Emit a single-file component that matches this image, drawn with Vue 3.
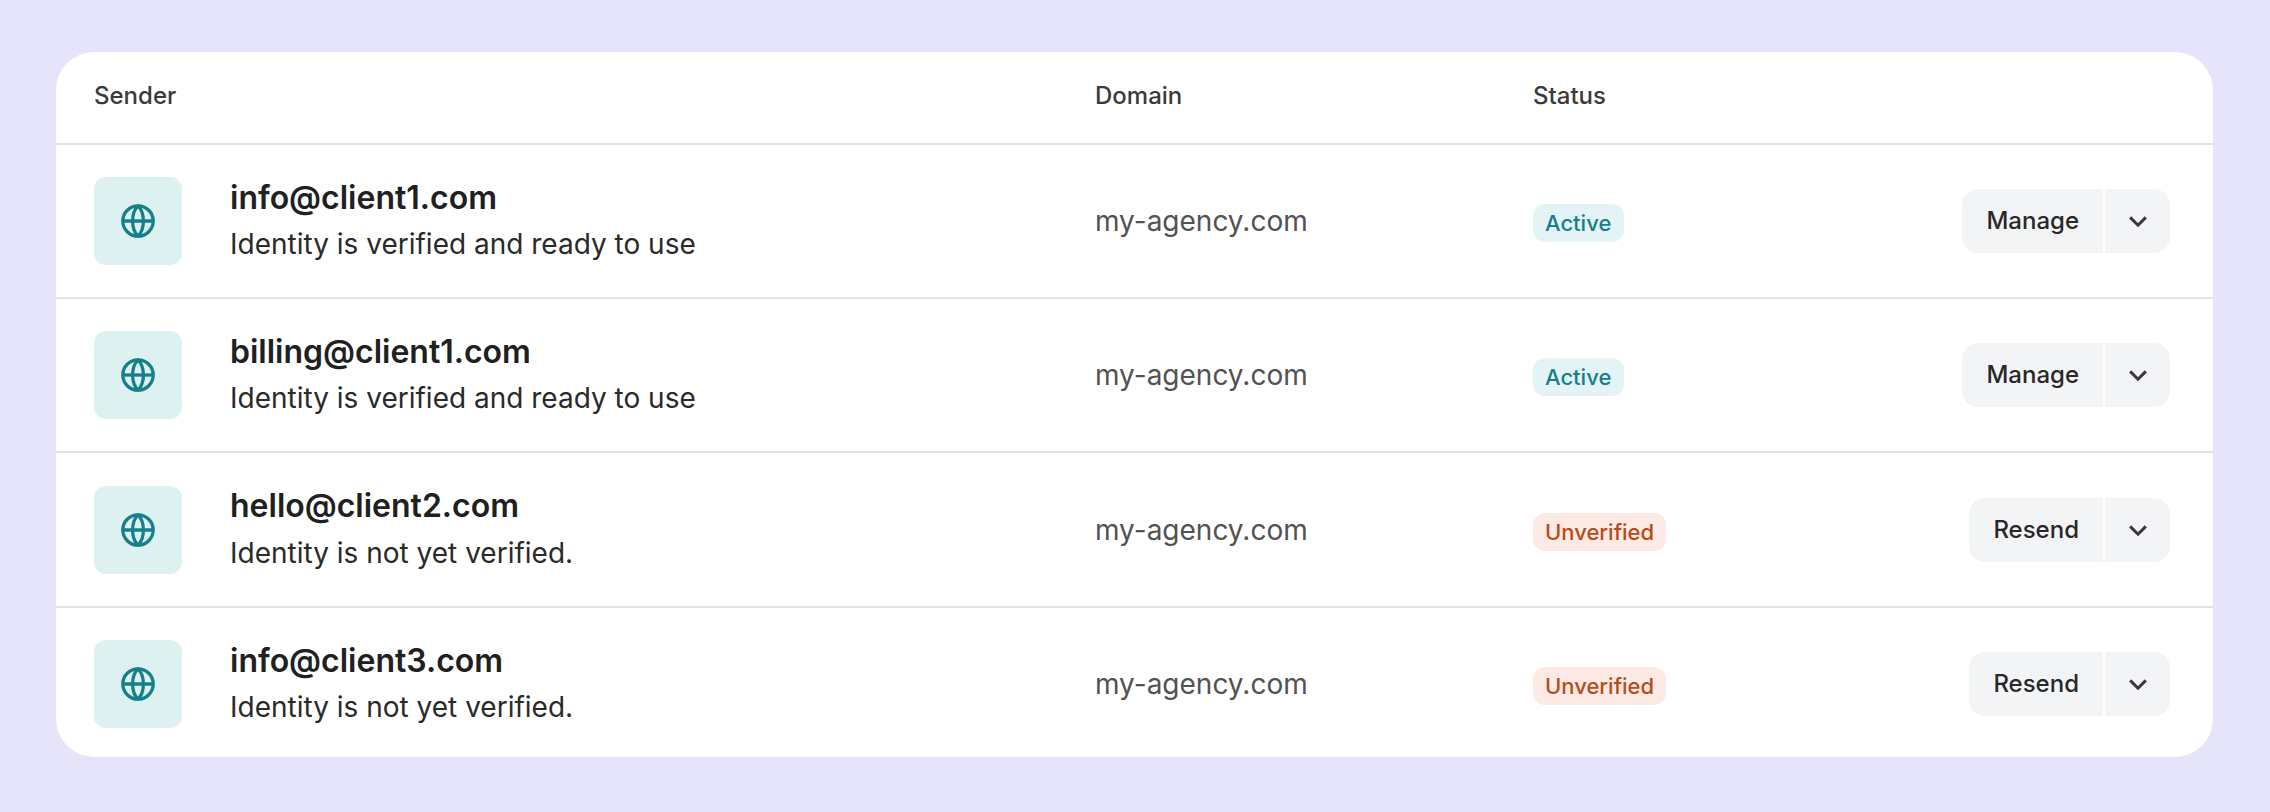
<script setup>
import { ref } from 'vue'

const senders = ref([
  { email: 'info@client1.com', note: 'Identity is verified and ready to use', domain: 'my-agency.com', status: 'Active', action: 'Manage' },
  { email: 'billing@client1.com', note: 'Identity is verified and ready to use', domain: 'my-agency.com', status: 'Active', action: 'Manage' },
  { email: 'hello@client2.com', note: 'Identity is not yet verified.', domain: 'my-agency.com', status: 'Unverified', action: 'Resend' },
  { email: 'info@client3.com', note: 'Identity is not yet verified.', domain: 'my-agency.com', status: 'Unverified', action: 'Resend' },
])
</script>

<template>
  <main class="page">
    <section class="card">
      <header class="head columns">
        <span>Sender</span>
        <span>Domain</span>
        <span>Status</span>
      </header>

      <div v-for="sender in senders" :key="sender.email" class="row columns">
        <div class="sender">
          <div class="tile">
            <svg class="globe" viewBox="0 0 34 34" fill="none" stroke="currentColor" stroke-width="3.3">
              <circle cx="17" cy="17" r="15.2" />
              <path d="M2 17h30" />
              <path d="M17 1.8C9.8 9 9.8 25 17 32.2C24.2 25 24.2 9 17 1.8z" stroke-linejoin="round" />
            </svg>
          </div>
          <div>
            <div class="email">{{ sender.email }}</div>
            <div class="note">{{ sender.note }}</div>
          </div>
        </div>
        <div class="domain">{{ sender.domain }}</div>
        <div class="status">
          <span class="badge" :class="sender.status.toLowerCase()">{{ sender.status }}</span>
        </div>
        <div class="actions">
          <button class="btn main">{{ sender.action }}</button>
          <button class="btn more" aria-label="More actions">
            <svg class="chevron" viewBox="0 0 18 12" fill="none" stroke="currentColor" stroke-width="3">
              <path d="M1.2 1.4L9 9.2l7.8-7.8" />
            </svg>
          </button>
        </div>
      </div>
    </section>
  </main>
</template>

<style>
body {
  background: #e6e4fa;
}
</style>

<style scoped>
.page {
  box-sizing: border-box;
  height: 812px;
  padding: 52px 57px 55px 56px;
  font-family: Inter, "Liberation Sans", sans-serif;
}

.card {
  height: 705px;
  background: #fff;
  border-radius: 38px;
  overflow: hidden;
}

.columns {
  display: grid;
  grid-template-columns: 1001px 438px 1fr auto;
  box-sizing: border-box;
  padding: 0 43px 0 38px;
}

.head {
  height: 91px;
  padding-top: 29px;
  font-size: 24px;
  line-height: 30px;
  font-weight: 500;
  color: #3a3a3a;
}

.row {
  height: 154px;
  padding-top: 34px;
  align-items: start;
  background: linear-gradient(#e2e2e2, #e2e2e2) top / 100% 2px no-repeat;
}

.row:nth-child(4) {
  height: 155px;
  padding-top: 35px;
}

.row:nth-child(4) .email {
  margin-top: -1px;
  padding-bottom: 1px;
}

.sender {
  display: flex;
  gap: 48px;
}

.tile {
  display: flex;
  align-items: center;
  justify-content: center;
  width: 88px;
  height: 88px;
  border-radius: 12px;
  background: #ddf1f0;
  color: #16808a;
}

.globe {
  width: 34px;
  height: 34px;
}

.email {
  font-size: 32px;
  line-height: 42px;
  font-weight: 600;
  color: #202021;
}

.note {
  margin-top: 4px;
  font-size: 28px;
  line-height: 42px;
  color: #2a2a2b;
}

.domain {
  font-size: 28px;
  line-height: 88px;
  color: #525253;
}

.status {
  display: flex;
  padding-top: 27px;
}

.badge {
  box-sizing: border-box;
  min-width: 91px;
  padding: 0 12px;
  border-radius: 12px;
  font-size: 22px;
  line-height: 38px;
  font-weight: 500;
}

.badge.active {
  background: #e4f3f5;
  color: #16808a;
}

.badge.unverified {
  background: #fdeae5;
  color: #b54c1a;
}

.actions {
  display: flex;
  gap: 2px;
  padding-top: 12px;
}

.btn {
  height: 64px;
  padding: 0;
  border: none;
  background: #f3f4f6;
  font-family: inherit;
  font-size: 24px;
  font-weight: 500;
  color: #28282a;
  cursor: pointer;
}

.main {
  padding: 0 24px 1px;
  border-radius: 16px 0 0 16px;
}

.more {
  display: flex;
  align-items: center;
  justify-content: center;
  width: 65px;
  border-radius: 0 16px 16px 0;
  color: #38383c;
}

.chevron {
  width: 18px;
  height: 12px;
  margin-top: 2px;
}
</style>
